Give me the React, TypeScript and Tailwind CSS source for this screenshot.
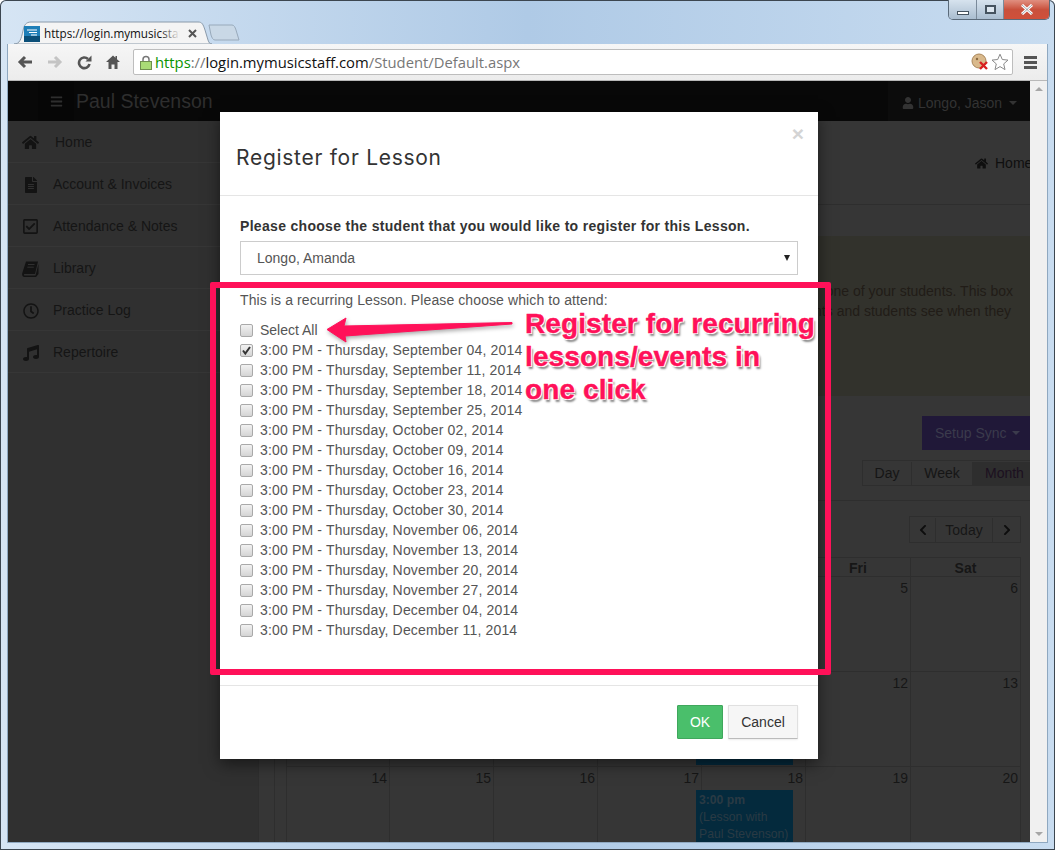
import React from 'react';
import { FaHome, FaFileAlt, FaRegCheckSquare, FaRegClock, FaMusic, FaUser, FaChevronLeft, FaChevronRight, FaBars } from 'react-icons/fa';

function SlantedBook({ className }: { className?: string; color?: string }) {
  return (
    <svg className={className} width="17" height="16" viewBox="0 0 17 16">
      <path d="M4 0.5H16L13 13H2.5C1.8 13 1.6 14.6 2.5 14.6H13.5L16.5 3V13L14 16H2.5C0.5 16 -0.3 14 0.3 12Z" fill="#131313" />
      <path d="M6 3.5H12.5M5.3 6.2H11.8" stroke="#303030" strokeWidth="1" />
    </svg>
  );
}

const NAV = [
  { label: 'Home', icon: FaHome, size: 'text-[17px]', text: 'ml-[16px]' },
  { label: 'Account & Invoices', icon: FaFileAlt, size: 'text-[16px]', text: 'ml-[14px]' },
  { label: 'Attendance & Notes', icon: FaRegCheckSquare, size: 'text-[17px]', text: 'ml-[14px]' },
  { label: 'Library', icon: SlantedBook, size: '', text: 'ml-[14px]' },
  { label: 'Practice Log', icon: FaRegClock, size: 'text-[16px]', text: 'ml-[14px]' },
  { label: 'Repertoire', icon: FaMusic, size: 'text-[16px]', text: 'ml-[14px]' },
];

const DATES = [
  'September 04, 2014',
  'September 11, 2014',
  'September 18, 2014',
  'September 25, 2014',
  'October 02, 2014',
  'October 09, 2014',
  'October 16, 2014',
  'October 23, 2014',
  'October 30, 2014',
  'November 06, 2014',
  'November 13, 2014',
  'November 20, 2014',
  'November 27, 2014',
  'December 04, 2014',
  'December 11, 2014',
];

const DAYS = ['Sun', 'Mon', 'Tue', 'Wed', 'Thu', 'Fri', 'Sat'];
const WEEKS = [
  [31, 1, 2, 3, 4, 5, 6],
  [7, 8, 9, 10, 11, 12, 13],
  [14, 15, 16, 17, 18, 19, 20],
];

function Checkbox({ checked }: { checked?: boolean }) {
  return (
    <span className="relative flex h-[13px] w-[13px] shrink-0 items-center justify-center rounded-[2px] border border-[#a9a9a9] bg-gradient-to-b from-[#f2f2f2] to-[#d4d4d4]">
      {checked && (
        <svg width="11" height="11" viewBox="0 0 11 11">
          <path d="M2 5.5 L4.3 8.5 L9 2" fill="none" stroke="#333" strokeWidth="2" />
        </svg>
      )}
    </span>
  );
}

function Row({ label, checked, wide }: { label: string; checked?: boolean; wide?: boolean }) {
  return (
    <div className="flex h-5 items-center gap-[7px]">
      <Checkbox checked={checked} />
      <span className={wide ? 'tracking-[0.16px]' : ''}>{label}</span>
    </div>
  );
}

function Sidebar() {
  return (
    <aside className="w-[250px] shrink-0 bg-[#303030] text-[14px] text-[#151515]">
      {NAV.map(({ label, icon: Icon, size, text }) => (
        <div key={label} className="flex h-[42px] items-center border-b border-[#363636] pl-[14px] pt-[2px]">
          <span className="flex w-[17px] justify-center">
            <Icon className={size} color="#131313" />
          </span>
          <span className={text}>{label}</span>
        </div>
      ))}
    </aside>
  );
}

function Calendar() {
  return (
    <div className="ml-[11px] mt-[14px] w-[735px] border-l border-[#2e2e2e] text-[14px] text-[#161616]">
      <div className="grid h-5 grid-cols-[103px_104px_104px_104px_104px_105px_110px] border-y border-[#2e2e2e] font-bold">
        {DAYS.map((d) => (
          <div key={d} className="flex items-center justify-center border-r border-[#2e2e2e] pb-[1px]">{d}</div>
        ))}
      </div>
      {WEEKS.map((week, i) => (
        <div key={i} className="grid h-[95px] grid-cols-[103px_104px_104px_104px_104px_105px_110px] border-b border-[#2e2e2e]">
          {week.map((n, j) => (
            <div key={j} className="relative border-r border-[#2e2e2e] pr-[2px] pt-[1px] text-right">
              {n}
              {j === 4 && (
                <div className="absolute left-[-6px] top-[23px] h-[70px] w-[97px] bg-[#042a3d] pl-[3px] pt-[2px] text-left text-[12.2px] leading-[17px] text-[#2a3a44]">
                  <b>3:00 pm</b>
                  <br />
                  (Lesson with Paul Stevenson)
                </div>
              )}
            </div>
          ))}
        </div>
      ))}
    </div>
  );
}

function Content() {
  return (
    <main className="min-w-0 flex-1 overflow-hidden border-l border-[#2e2e2e] bg-[#363636] font-['Liberation_Sans',sans-serif] text-[14px]">
      <div className="ml-[15px] h-full border-l border-[#2e2e2e]">
        <div className="flex h-[84px] items-center gap-[7px] border-b border-[#2e2e2e] pl-[700px] pt-[2px] text-[#0f0f0f]">
          <FaHome className="shrink-0 text-[13px]" />
          <span>Home</span>
        </div>
        <div className="mt-[31px] flex h-[160px] flex-col items-end bg-[#32322c] pr-[17px] pt-[45px] leading-5 text-[#211c17]">
          <p>one of your students. This box</p>
          <p className="mr-[2px]">parents and students see when they</p>
        </div>
        <div className="mt-5 flex h-[34px] justify-end">
          <div className="flex w-[108px] items-center gap-[5px] bg-[#201838] pl-[13px] text-[#3b3b4c]">
            Setup Sync
            <span className="h-0 w-0 border-x-[4px] border-t-[4px] border-x-transparent border-t-[#3b3b4c]" />
          </div>
        </div>
        <div className="mt-[10px] flex h-[26px] justify-end pl-0 text-[#151515]">
          <div className="flex w-[168px] border border-r-0 border-[#2e2e2e] pt-[1px]">
            <span className="flex w-[49px] items-center justify-center border-r border-[#2e2e2e]">Day</span>
            <span className="flex w-[61px] items-center justify-center border-r border-[#2e2e2e]">Week</span>
            <span className="flex flex-1 items-center whitespace-nowrap bg-[#2e2e2e] pl-[12px] text-[#1c1020]">Month</span>
          </div>
        </div>
        <div className="mt-[14px] h-px bg-[#2e2e2e]" />
        <div className="ml-[634px] mt-[15px] flex h-[27px] w-[112px] border border-[#2e2e2e] pt-[1px] text-[#161616]">
          <span className="flex w-[26px] items-center justify-center border-r border-[#2e2e2e]"><FaChevronLeft className="text-[12px] text-[#0d0d0d]" /></span>
          <span className="flex flex-1 items-center justify-center border-r border-[#2e2e2e]">Today</span>
          <span className="flex w-[27px] items-center justify-center"><FaChevronRight className="text-[12px] text-[#0d0d0d]" /></span>
        </div>
        <Calendar />
      </div>
    </main>
  );
}

function Modal() {
  return (
    <div className="absolute left-[220px] top-[112px] flex h-[647px] w-[598px] flex-col bg-white font-['Liberation_Sans',sans-serif] text-[14px] text-[#555] shadow-[0_5px_15px_rgba(0,0,0,0.5)]">
      <div className="relative flex h-[84px] shrink-0 items-start border-b border-[#e5e5e5] pl-4 pt-[31px]">
        <h1 className="font-['Inter',sans-serif] text-[21px] leading-[30px] tracking-[0.72px] text-[#333]">Register for Lesson</h1>
        <span className="absolute right-[14px] top-[9px] text-[21px] font-bold leading-[26px] text-[#d4d4d4]">×</span>
      </div>
      <div className="flex-1 px-5 pt-[22px]">
        <p className="text-[14px] font-bold leading-4 tracking-[0.31px] text-[#333]">Please choose the student that you would like to register for this Lesson.</p>
        <div className="mt-[7px] flex h-[34px] items-center justify-between border border-[#ccc] pl-4 pr-[7px]">
          <span>Longo, Amanda</span>
          <span className="h-0 w-0 border-x-[3px] border-t-[6px] border-x-transparent border-t-[#222]" />
        </div>
        <p className="mt-[17px] leading-4 tracking-[0.1px]">This is a recurring Lesson. Please choose which to attend:</p>
        <div className="mt-[12px]">
          <Row label="Select All" />
          {DATES.map((d, i) => (
            <Row key={d} label={`3:00 PM - Thursday, ${d}`} checked={i === 0} wide />
          ))}
        </div>
      </div>
      <div className="flex h-[74px] shrink-0 items-start justify-end gap-[5px] border-t border-[#e5e5e5] pr-5 pt-[19px]">
        <button className="h-[34px] w-[46px] rounded-[1px] border border-[#3fa75c] bg-[#4abf6b] text-white">OK</button>
        <button className="h-[34px] w-[70px] rounded-[1px] border border-[#e0e0e0] border-b-[#bbb] bg-[#f6f6f6] text-[#333] shadow-[0_1px_2px_rgba(0,0,0,0.08)]">Cancel</button>
      </div>
    </div>
  );
}

function Annotation() {
  return (
    <>
      <div className="absolute left-[210px] top-[282px] h-[393px] w-[621px] rounded-[2px] border-[6px] border-[#ff1159]" />
      <svg className="absolute left-[322px] top-[312px] drop-shadow-[1px_2px_2px_rgba(0,0,0,0.35)]" width="200" height="36" viewBox="0 0 200 36">
        <path d="M5 17.5 L24 6 L22 14 L190 10.5 L190 12 L23 24 L24 30 Z" fill="#ff1159" stroke="#ff1159" strokeWidth="1" />
      </svg>
      <div className="absolute left-[525px] top-[307px] whitespace-nowrap font-['Liberation_Sans',sans-serif] text-[28px] font-bold leading-[33px] tracking-[0.1px] text-[#ff1159] [-webkit-text-stroke:0.4px_#ff1159] [text-shadow:-1px_-1px_0_#fff,1px_-1px_0_#fff,-1px_1px_0_#fff,1px_1px_0_#fff,2px_3px_2px_#888]">
        Register for recurring
        <br />
        lessons/events in
        <br />
        one click
      </div>
    </>
  );
}

function TabStrip() {
  return (
    <div className="relative flex h-11 shrink-0 items-end pl-[14px]">
      <div className="relative h-[23px] w-[198px]">
        <svg className="absolute inset-0" width="198" height="23" viewBox="0 0 198 23">
          <path d="M0 23 C6 23 7 18 9 10 C10 4 12 1 17 1 L184 1 C188 1 189 3 191 9 L194 19 C195 22 196 23 198 23 Z" fill="#f4f4f4" stroke="#8a9aaa" strokeWidth="1" />
        </svg>
        <div className="relative flex h-full items-center pl-[10px] pt-[2px]">
          <svg width="16" height="16" viewBox="0 0 16 16" className="shrink-0">
            <rect width="16" height="16" fill="#1f7fb8" />
            <rect y="10" width="16" height="6" fill="#0b4f78" />
            <path d="M3 4H13M5 6.5H13M7 9H13" stroke="#fff" strokeWidth="1.2" />
          </svg>
          <span className="relative ml-1 w-[136px] overflow-hidden whitespace-nowrap font-['Open_Sans',sans-serif] text-[11.7px] text-[#111]">
            https://login.mymusicstaff.com
            <span className="absolute inset-y-0 right-0 w-5 bg-gradient-to-r from-transparent to-[#f4f4f4]" />
          </span>
          <svg width="9" height="9" viewBox="0 0 9 9" className="ml-[8px]">
            <path d="M1 1L8 8M8 1L1 8" stroke="#555" strokeWidth="2" />
          </svg>
        </div>
      </div>
      <svg className="mb-[3px] ml-[-4px]" width="32" height="17" viewBox="0 0 32 17">
        <path d="M1 1 L24 1 C26 1 27 3 28 6 L31 16 L7 16 C5 16 4 14 3 11 Z" fill="#c9d8e6" stroke="#98a9ba" />
      </svg>
      {/* window buttons */}
      <div className="absolute right-[5px] top-0 flex h-5 w-[102px] overflow-hidden rounded-b-[5px] border border-t-0 border-[#5a6a7a]">
        <div className="flex w-[28px] items-end justify-center border-r border-[#7a8a9a] bg-gradient-to-b from-[#d7e3ee] to-[#a9bdd0] pb-[4px]">
          <span className="h-[4px] w-[12px] border border-[#45535f] bg-white" />
        </div>
        <div className="flex w-[27px] items-center justify-center border-r border-[#7a8a9a] bg-gradient-to-b from-[#d7e3ee] to-[#a9bdd0]">
          <span className="h-[9px] w-[11px] border-2 border-[#45535f] bg-[#dce6ef]" />
        </div>
        <div className="flex flex-1 items-center justify-center bg-gradient-to-b from-[#e08f80] via-[#c9503c] to-[#d0503a]">
          <svg width="14" height="11" viewBox="0 0 14 11">
            <path d="M2 1L12 10M12 1L2 10" stroke="#fff" strokeWidth="3" />
            <path d="M2 1L12 10M12 1L2 10" stroke="#45535f" strokeWidth="0.5" />
          </svg>
        </div>
      </div>
    </div>
  );
}

function Toolbar() {
  return (
    <div className="flex h-[37px] shrink-0 items-center border-b border-[#b8b8b8] bg-gradient-to-b from-[#f6f6f6] to-[#ececec] pl-[9px] pr-[8px]">
      <svg width="16" height="14" viewBox="0 0 16 14">
        <path d="M15 7H4M8 2L3 7L8 12" fill="none" stroke="#555" strokeWidth="3" />
      </svg>
      <svg width="16" height="14" viewBox="0 0 16 14" className="ml-[14px]">
        <path d="M1 7H12M8 2L13 7L8 12" fill="none" stroke="#c4c4c4" strokeWidth="3" />
      </svg>
      <svg width="15" height="15" viewBox="0 0 15 15" className="ml-[14px]">
        <path d="M12.5 9A5.3 5.3 0 1 1 11 4" fill="none" stroke="#555" strokeWidth="2.6" />
        <path d="M8.5 6.5H14.5V0.5Z" fill="#555" />
      </svg>
      <svg width="14" height="14" viewBox="0 0 14 14" className="ml-[14px]">
        <path d="M7 0.5L0 7H2.5V14H5.5V9.5H8.5V14H11.5V7H14L11 4.2V1H9.5V2.8Z" fill="#555" />
      </svg>
      <div className="ml-[13px] flex h-[26px] w-[880px] items-center rounded-[2px] border border-[#bdbdbd] bg-white pl-[6px] pr-[3px] font-['Open_Sans',sans-serif] text-[14.8px]">
        <svg width="12" height="15" viewBox="0 0 12 15" className="shrink-0">
          <path d="M3 7V4.5a3 3 0 0 1 6 0V7" fill="none" stroke="#777" strokeWidth="1.5" />
          <rect x="0.5" y="6.5" width="11" height="8" fill="#a9dc76" stroke="#6f8f4f" />
        </svg>
        <span className="ml-[3px] whitespace-nowrap text-[#0a9400]">https</span>
        <span className="text-[#777]">://</span>
        <span className="text-[#111]">login.mymusicstaff.com</span>
        <span className="text-[#777]">/Student/Default.aspx</span>
        <span className="ml-auto flex items-center gap-[2px]">
          <svg width="18" height="18" viewBox="0 0 18 18">
            <circle cx="8" cy="8" r="7" fill="#d9b98c" stroke="#a9865a" />
            <circle cx="6" cy="6" r="1.2" fill="#8a6a42" />
            <path d="M9 9L16 16M16 9L9 16" stroke="#d81f1f" strokeWidth="2.4" />
          </svg>
          <svg width="18" height="18" viewBox="0 0 18 18">
            <path d="M9 1.2L11.3 6.5L17 7.1L12.7 10.9L14 16.6L9 13.6L4 16.6L5.3 10.9L1 7.1L6.7 6.5Z" fill="#fff" stroke="#8a8a8a" />
          </svg>
        </span>
      </div>
      <div className="ml-[11px] flex w-[13px] flex-col gap-[2px]">
        <span className="h-[3px] bg-[#555]" />
        <span className="h-[3px] bg-[#555]" />
        <span className="h-[3px] bg-[#555]" />
      </div>
    </div>
  );
}

function Scrollbar() {
  return (
    <div className="flex w-[17px] shrink-0 flex-col items-center justify-between bg-[#f0f0f0] py-[6px]">
      <span className="h-0 w-0 border-x-[4px] border-b-[4px] border-x-transparent border-b-[#a6a6a6]" />
      <span className="h-0 w-0 border-x-[4px] border-t-[4px] border-x-transparent border-t-[#a6a6a6]" />
    </div>
  );
}

export default function App() {
  return (
    <div className="relative flex h-[850px] w-[1055px] flex-col overflow-hidden rounded-t-[6px] bg-gradient-to-r from-[#d6e5f4] via-[#afcae6] to-[#c8dcf0] shadow-[inset_0_0_0_1px_#3c4650]">
      <TabStrip />
      <div className="mx-[7px] mb-[7px] flex min-h-0 flex-1 flex-col border-x border-b border-[#8fa8c0]">
        <Toolbar />
        <div className="flex min-h-0 flex-1">
          <div className="flex min-w-0 flex-1 flex-col overflow-hidden">
            <header className="flex h-10 shrink-0 bg-[#080808] font-['Liberation_Sans',sans-serif]">
              <div className="ml-[30px] flex w-[36px] items-center justify-center bg-[#060606]">
                <FaBars className="text-[13px] text-[#2e2e2e]" />
              </div>
              <span className="ml-[2px] flex items-center pt-[2px] text-[19.5px] text-[#2e2e2e]">Paul Stevenson</span>
              <div className="ml-auto flex w-[142px] items-center gap-[4px] bg-[#0c0c0c] pl-[14px] pt-[4px] text-[14px] text-[#333]">
                <FaUser className="text-[12px]" />
                Longo, Jason
                <span className="ml-[3px] h-0 w-0 border-x-[4px] border-t-[4px] border-x-transparent border-t-[#333]" />
              </div>
            </header>
            <div className="flex min-h-0 flex-1 font-['Liberation_Sans',sans-serif]">
              <Sidebar />
              <Content />
            </div>
          </div>
          <Scrollbar />
        </div>
      </div>
      <Modal />
      <Annotation />
    </div>
  );
}
